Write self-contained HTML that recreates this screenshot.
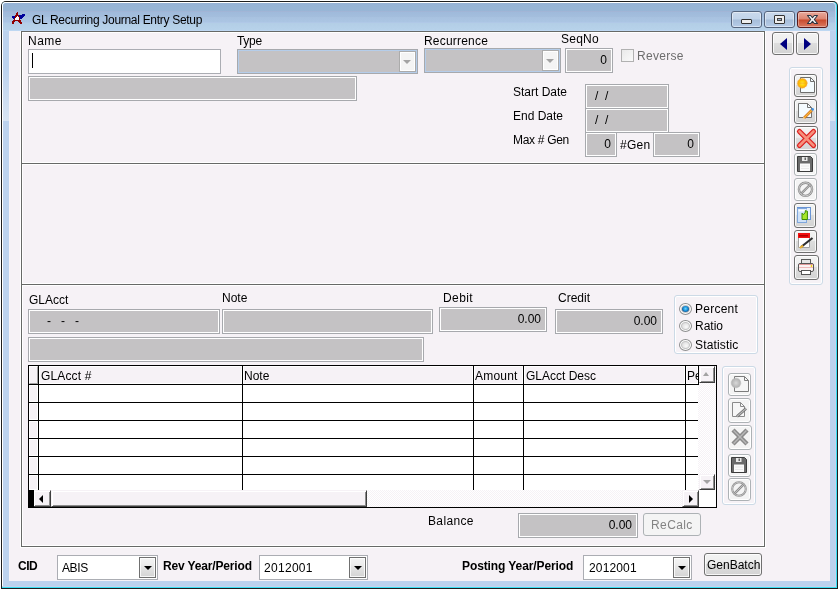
<!DOCTYPE html>
<html><head><meta charset="utf-8">
<style>
*{box-sizing:border-box}
html,body{margin:0;padding:0;width:839px;height:590px;overflow:hidden;background:#fff;-webkit-font-smoothing:antialiased;font-family:"Liberation Sans",sans-serif;font-size:12px;color:#000}
.a{position:absolute}
.t{position:absolute;white-space:nowrap;line-height:14px;font-size:12px}
.b{font-weight:bold}
/* gray readonly field: gray border, white inner ring, gray fill */
.fld{position:absolute;border:1px solid #A7A9AD;background:#C4C2C4;box-shadow:inset 0 0 0 1px #fff}
/* combo disabled with light blue inner ring */
.cmb{position:absolute;border:1px solid #A7A9AD;background:#C4C2C4;box-shadow:inset 0 0 0 1px #B5CDEA}
.dd{position:absolute;border:1px solid #ABABAB;background:#F4F4F4;box-shadow:inset 0 0 0 1px #fff}
.tri{position:absolute;width:0;height:0;border-left:4px solid transparent;border-right:4px solid transparent;border-top:4px solid #A3A3A3}
.hl{position:absolute;height:1px;background:#676967}
.vl{position:absolute;width:1px;background:#676967}
.wh{position:absolute;background:#fff}
.tb{position:absolute;border:1px solid #707070;border-radius:3px;background:linear-gradient(#F3F3F3 0%,#EDEDED 45%,#DDDDDD 50%,#D3D3D3 100%);box-shadow:inset 0 0 0 1px rgba(255,255,255,.8)}
.tbd{position:absolute;border:1px solid #ADB2B5;border-radius:3px;background:#F4F4F4;box-shadow:inset 0 0 0 1px #fff}
.grp{position:absolute;border:1px solid #CCDAE6;border-radius:3px;box-shadow:inset 0 0 0 1px #fff}
#root{position:absolute;left:0;top:0;width:839px;height:590px;will-change:transform}
</style></head><body><div id="root">
<!-- window frame -->
<div class="a" style="left:1px;top:1px;width:837px;height:588px;background:#1E1E1E;border-radius:5px 5px 0 0"></div>
<div class="a" style="left:2px;top:2px;width:835px;height:586px;background:#3AE0F4;border-radius:4px 4px 0 0"></div>
<div class="a" style="left:2px;top:2px;width:834px;height:585px;background:#C7D3EC;border-radius:4px 4px 0 0"></div>
<div class="a" style="left:2px;top:2px;width:833px;height:584px;background:#fff;border-radius:4px 4px 0 0"></div>
<div class="a" style="left:3px;top:3px;width:832px;height:583px;background:#BCD2EE;border-radius:3px 3px 0 0"></div>
<div class="a" style="left:3px;top:3px;width:832px;height:28px;border-radius:3px 3px 0 0;background:linear-gradient(#96B3D6 0px,#98B6D6 8px,#A2B5D6 8px,#A2B5D6 9px,#9FBADB 9px,#A4BEDD 14px,#A8C2E0 14px,#ABC5E3 19px,#B0C8E7 19px,#B0C8E7 20px,#B3CEE6 20px,#B7D2EA 27px,#BED7F2 27px)"></div>
<div class="a" style="left:3px;top:67px;width:6px;height:54px;background:linear-gradient(#BCD2EE,#D8E4F3)"></div>
<div class="a" style="left:830px;top:67px;width:5px;height:54px;background:linear-gradient(#BCD2EE,#D8E4F3)"></div>
<div class="a" style="left:9px;top:31px;width:821px;height:550px;background:#F6F2F6"></div>

<!-- title -->
<svg class="a" style="left:0;top:0" width="30" height="30" shape-rendering="crispEdges"><rect x="22" y="14" width="1" height="1" fill="#00009A"/><rect x="23" y="14" width="1" height="1" fill="#00009A"/><rect x="24" y="14" width="1" height="1" fill="#00009A"/><rect x="19" y="15" width="1" height="1" fill="#00009A"/><rect x="20" y="15" width="1" height="1" fill="#00009A"/><rect x="21" y="15" width="1" height="1" fill="#00009A"/><rect x="22" y="15" width="1" height="1" fill="#00009A"/><rect x="23" y="15" width="1" height="1" fill="#00009A"/><rect x="24" y="15" width="1" height="1" fill="#00009A"/><rect x="12" y="16" width="1" height="1" fill="#00009A"/><rect x="13" y="16" width="1" height="1" fill="#00009A"/><rect x="14" y="16" width="1" height="1" fill="#00009A"/><rect x="19" y="16" width="1" height="1" fill="#00009A"/><rect x="20" y="16" width="1" height="1" fill="#00009A"/><rect x="21" y="16" width="1" height="1" fill="#00009A"/><rect x="22" y="16" width="1" height="1" fill="#00009A"/><rect x="23" y="16" width="1" height="1" fill="#00009A"/><rect x="12" y="17" width="1" height="1" fill="#00009A"/><rect x="13" y="17" width="1" height="1" fill="#00009A"/><rect x="14" y="17" width="1" height="1" fill="#00009A"/><rect x="19" y="17" width="1" height="1" fill="#00009A"/><rect x="20" y="17" width="1" height="1" fill="#00009A"/><rect x="21" y="17" width="1" height="1" fill="#00009A"/><rect x="22" y="17" width="1" height="1" fill="#00009A"/><rect x="13" y="18" width="1" height="1" fill="#00009A"/><rect x="20" y="18" width="1" height="1" fill="#00009A"/><rect x="21" y="18" width="1" height="1" fill="#00009A"/><rect x="17" y="12" width="1" height="1" fill="#900000"/><rect x="16" y="13" width="1" height="1" fill="#900000"/><rect x="17" y="13" width="1" height="1" fill="#900000"/><rect x="16" y="14" width="1" height="1" fill="#900000"/><rect x="17" y="14" width="1" height="1" fill="#900000"/><rect x="15" y="15" width="1" height="1" fill="#900000"/><rect x="16" y="15" width="1" height="1" fill="#900000"/><rect x="17" y="15" width="1" height="1" fill="#900000"/><rect x="18" y="15" width="1" height="1" fill="#900000"/><rect x="15" y="16" width="1" height="1" fill="#900000"/><rect x="16" y="16" width="1" height="1" fill="#900000"/><rect x="18" y="16" width="1" height="1" fill="#900000"/><rect x="15" y="17" width="1" height="1" fill="#900000"/><rect x="19" y="17" width="1" height="1" fill="#900000"/><rect x="14" y="18" width="1" height="1" fill="#900000"/><rect x="19" y="18" width="1" height="1" fill="#900000"/><rect x="14" y="19" width="1" height="1" fill="#900000"/><rect x="19" y="19" width="1" height="1" fill="#900000"/><rect x="13" y="20" width="1" height="1" fill="#900000"/><rect x="14" y="20" width="1" height="1" fill="#900000"/><rect x="15" y="20" width="1" height="1" fill="#900000"/><rect x="16" y="20" width="1" height="1" fill="#900000"/><rect x="17" y="20" width="1" height="1" fill="#900000"/><rect x="18" y="20" width="1" height="1" fill="#900000"/><rect x="19" y="20" width="1" height="1" fill="#900000"/><rect x="20" y="20" width="1" height="1" fill="#900000"/><rect x="12" y="21" width="1" height="1" fill="#900000"/><rect x="13" y="21" width="1" height="1" fill="#900000"/><rect x="14" y="21" width="1" height="1" fill="#900000"/><rect x="18" y="21" width="1" height="1" fill="#900000"/><rect x="19" y="21" width="1" height="1" fill="#900000"/><rect x="20" y="21" width="1" height="1" fill="#900000"/><rect x="12" y="22" width="1" height="1" fill="#900000"/><rect x="13" y="22" width="1" height="1" fill="#900000"/><rect x="19" y="22" width="1" height="1" fill="#900000"/><rect x="20" y="22" width="1" height="1" fill="#900000"/><rect x="21" y="22" width="1" height="1" fill="#900000"/><rect x="12" y="23" width="1" height="1" fill="#900000"/><rect x="13" y="23" width="1" height="1" fill="#900000"/><rect x="20" y="23" width="1" height="1" fill="#900000"/><rect x="21" y="23" width="1" height="1" fill="#900000"/><rect x="17" y="16" width="1" height="1" fill="#FFFFFF"/><rect x="16" y="17" width="1" height="1" fill="#FFFFFF"/><rect x="17" y="17" width="1" height="1" fill="#FFFFFF"/><rect x="18" y="17" width="1" height="1" fill="#FFFFFF"/><rect x="15" y="18" width="1" height="1" fill="#FFFFFF"/><rect x="16" y="18" width="1" height="1" fill="#FFFFFF"/><rect x="17" y="18" width="1" height="1" fill="#FFFFFF"/><rect x="18" y="18" width="1" height="1" fill="#FFFFFF"/><rect x="15" y="19" width="1" height="1" fill="#FFFFFF"/><rect x="16" y="19" width="1" height="1" fill="#FFFFFF"/><rect x="17" y="19" width="1" height="1" fill="#FFFFFF"/><rect x="18" y="19" width="1" height="1" fill="#FFFFFF"/></svg>
<div class="t" style="left:32px;top:13px;font-size:12px;letter-spacing:-0.3px">GL Recurring Journal Entry Setup</div>

<!-- caption buttons -->
<div class="a" style="left:731px;top:11px;width:31px;height:17px;border:1px solid #55657E;border-radius:3px;background:linear-gradient(#CAD9EC 0%,#C1D4EA 48%,#A6BDD9 52%,#B6CCE8 100%);box-shadow:inset 0 0 0 1px rgba(255,255,255,.45)"></div>
<div class="a" style="left:741px;top:19px;width:11px;height:5px;border:1px solid #333;border-radius:1px;background:#EEE"></div>
<div class="a" style="left:764px;top:11px;width:31px;height:17px;border:1px solid #55657E;border-radius:3px;background:linear-gradient(#CAD9EC 0%,#C1D4EA 48%,#A6BDD9 52%,#B6CCE8 100%);box-shadow:inset 0 0 0 1px rgba(255,255,255,.45)"></div>
<div class="a" style="left:774px;top:15px;width:11px;height:9px;border:1px solid #333;border-radius:1px;background:#EEE"></div>
<div class="a" style="left:777px;top:18px;width:5px;height:3px;border:1px solid #444;background:#9FB4D0"></div>
<div class="a" style="left:797px;top:11px;width:31px;height:17px;border:1px solid #5A1A1A;border-radius:3px;background:linear-gradient(#E9A99C 0%,#DC8470 48%,#C84A2C 52%,#D97A62 100%);box-shadow:inset 0 0 0 1px rgba(255,255,255,.35)"></div>
<svg class="a" style="left:806px;top:14px" width="13" height="11"><polygon points="1.5,1.5 4.6,1.5 6.5,3.7 8.4,1.5 11.5,1.5 8.3,5.5 11.5,9.5 8.4,9.5 6.5,7.3 4.6,9.5 1.5,9.5 4.7,5.5" fill="#F4F4F4" stroke="#2E3642" stroke-width="1.1" stroke-linejoin="round"/></svg>

<!-- panel lines (groove) -->
<div class="wh" style="left:20px;top:31px;width:1px;height:517px"></div>
<div class="wh" style="left:765px;top:31px;width:1px;height:517px"></div>
<div class="wh" style="left:22px;top:32px;width:741px;height:1px"></div>
<div class="wh" style="left:22px;top:162px;width:741px;height:3px"></div>
<div class="wh" style="left:22px;top:283px;width:741px;height:3px"></div>
<div class="wh" style="left:22px;top:545px;width:741px;height:1px"></div>
<div class="wh" style="left:20px;top:547px;width:746px;height:1px"></div>
<div class="wh" style="left:22px;top:32px;width:1px;height:514px"></div>
<div class="wh" style="left:763px;top:32px;width:1px;height:514px"></div>
<div class="hl" style="left:21px;top:31px;width:744px"></div>
<div class="hl" style="left:21px;top:163px;width:744px"></div>
<div class="hl" style="left:21px;top:284px;width:744px"></div>
<div class="hl" style="left:21px;top:546px;width:744px"></div>
<div class="vl" style="left:21px;top:31px;height:516px"></div>
<div class="vl" style="left:764px;top:31px;height:516px"></div>

<!-- top section -->
<div class="t" style="left:28px;top:34px;letter-spacing:0.5px">Name</div>
<div class="t" style="left:237px;top:34px;letter-spacing:-0.3px">Type</div>
<div class="t" style="left:424px;top:34px;letter-spacing:0.2px">Recurrence</div>
<div class="t" style="left:561px;top:32px;letter-spacing:0.25px">SeqNo</div>

<div class="a" style="left:28px;top:49px;width:193px;height:25px;border:1px solid #ABADB3;background:#fff"></div>
<div class="a" style="left:32px;top:53px;width:1px;height:15px;background:#000"></div>

<div class="cmb" style="left:237px;top:49px;width:181px;height:25px"></div>
<div class="dd" style="left:399px;top:51px;width:17px;height:21px"></div>
<div class="tri" style="left:403px;top:60px;border-left-width:4px;border-right-width:4px"></div>

<div class="cmb" style="left:424px;top:48px;width:137px;height:25px"></div>
<div class="dd" style="left:542px;top:50px;width:17px;height:21px"></div>
<div class="tri" style="left:546px;top:59px"></div>

<div class="fld" style="left:565px;top:48px;width:48px;height:25px"></div>
<div class="t" style="left:565px;top:53px;width:42px;text-align:right">0</div>

<div class="a" style="left:621px;top:49px;width:13px;height:13px;border:1px solid #B1B1B1;background:linear-gradient(135deg,#E9E9E9,#FAFAFA)"></div>
<div class="t" style="left:637px;top:49px;color:#6D6D6D;letter-spacing:0.3px">Reverse</div>

<div class="fld" style="left:28px;top:76px;width:329px;height:25px"></div>

<div class="t" style="left:513px;top:85px">Start Date</div>
<div class="t" style="left:513px;top:109px">End Date</div>
<div class="t" style="left:513px;top:133px;letter-spacing:-0.3px">Max # Gen</div>
<div class="fld" style="left:585px;top:84px;width:84px;height:25px"></div>
<div class="fld" style="left:585px;top:108px;width:84px;height:25px"></div>
<div class="t" style="left:595px;top:89px">/&nbsp;&nbsp;/</div>
<div class="t" style="left:595px;top:113px">/&nbsp;&nbsp;/</div>
<div class="fld" style="left:585px;top:132px;width:32px;height:25px"></div>
<div class="t" style="left:585px;top:137px;width:26px;text-align:right">0</div>
<div class="t" style="left:620px;top:138px;letter-spacing:0.3px">#Gen</div>
<div class="fld" style="left:653px;top:132px;width:47px;height:25px"></div>
<div class="t" style="left:653px;top:137px;width:41px;text-align:right">0</div>

<!-- detail section -->
<div class="t" style="left:29px;top:293px">GLAcct</div>
<div class="t" style="left:222px;top:291px">Note</div>
<div class="t" style="left:443px;top:291px;letter-spacing:0.4px">Debit</div>
<div class="t" style="left:558px;top:291px">Credit</div>

<div class="fld" style="left:28px;top:309px;width:192px;height:25px"></div>
<div class="t" style="left:47px;top:314px">-&nbsp;&nbsp;&nbsp;-&nbsp;&nbsp;&nbsp;-</div>
<div class="fld" style="left:222px;top:309px;width:211px;height:25px"></div>
<div class="fld" style="left:439px;top:307px;width:108px;height:25px"></div>
<div class="t" style="left:439px;top:312px;width:102px;text-align:right">0.00</div>
<div class="fld" style="left:555px;top:309px;width:108px;height:25px"></div>
<div class="t" style="left:555px;top:314px;width:102px;text-align:right">0.00</div>
<div class="fld" style="left:28px;top:337px;width:396px;height:25px"></div>

<div class="grp" style="left:674px;top:295px;width:84px;height:59px"></div>
<div class="a" style="left:679px;top:303px;width:13px;height:12px;border-radius:50%;border:1px solid #8E8F8F;background:#FDFDFD"></div>
<div class="a" style="left:681px;top:305px;width:9px;height:8px;border-radius:50%;border:1px solid #C8C8C8;background:#E6E6E6"></div>
<div class="a" style="left:682px;top:306px;width:7px;height:6px;border-radius:50%;background:radial-gradient(circle at 50% 45%,#6FD6FF 0,#1A90D8 45%,#0A3468 85%,#1C2C40 100%)"></div>
<div class="a" style="left:679px;top:320px;width:13px;height:12px;border-radius:50%;border:1px solid #8E8F8F;background:#FDFDFD"></div>
<div class="a" style="left:681px;top:322px;width:9px;height:8px;border-radius:50%;border:1px solid #C2C2C2;background:radial-gradient(circle at 60% 65%,#FAFAFA 0,#E4E4E4 60%,#D0D0D0 100%)"></div>
<div class="a" style="left:679px;top:339px;width:13px;height:12px;border-radius:50%;border:1px solid #8E8F8F;background:#FDFDFD"></div>
<div class="a" style="left:681px;top:341px;width:9px;height:8px;border-radius:50%;border:1px solid #C2C2C2;background:radial-gradient(circle at 60% 65%,#FAFAFA 0,#E4E4E4 60%,#D0D0D0 100%)"></div>
<div class="t" style="left:695px;top:302px;letter-spacing:0.25px">Percent</div>
<div class="t" style="left:695px;top:319px">Ratio</div>
<div class="t" style="left:695px;top:338px;letter-spacing:0.15px">Statistic</div>

<!-- grid -->
<div class="a" style="left:28px;top:365px;width:689px;height:143px;background:#000"></div>
<div class="a" style="left:29px;top:366px;width:670px;height:124px;background:#fff"></div>
<div class="a" style="left:39px;top:366px;width:203px;height:18px;background:#F6F2F6;border:1px solid #fff"></div>
<div class="a" style="left:243px;top:366px;width:230px;height:18px;background:#F6F2F6;border:1px solid #fff"></div>
<div class="a" style="left:474px;top:366px;width:49px;height:18px;background:#F6F2F6;border:1px solid #fff"></div>
<div class="a" style="left:524px;top:366px;width:161px;height:18px;background:#F6F2F6;border:1px solid #fff"></div>
<div class="a" style="left:686px;top:366px;width:12px;height:18px;background:#F6F2F6;border:1px solid #fff"></div>

<div class="hl" style="left:29px;top:384px;width:670px;background:#000"></div>
<div class="hl" style="left:29px;top:402px;width:669px;background:#000"></div>
<div class="hl" style="left:29px;top:420px;width:669px;background:#000"></div>
<div class="hl" style="left:29px;top:438px;width:669px;background:#000"></div>
<div class="hl" style="left:29px;top:456px;width:669px;background:#000"></div>
<div class="hl" style="left:29px;top:474px;width:669px;background:#000"></div>
<div class="vl" style="left:38px;top:366px;height:124px;background:#000"></div>
<div class="vl" style="left:242px;top:366px;height:124px;background:#000"></div>
<div class="vl" style="left:473px;top:366px;height:124px;background:#000"></div>
<div class="vl" style="left:523px;top:366px;height:124px;background:#000"></div>
<div class="vl" style="left:685px;top:366px;height:124px;background:#000"></div>
<div class="a" style="left:29px;top:366px;width:9px;height:18px;background:#F6F2F6;border-style:solid;border-width:1px;border-color:#fff #A0A0A0 #A0A0A0 #fff"></div>
<div class="a" style="left:29px;top:385px;width:9px;height:17px;background:#F6F2F6;border:1px solid #fff"></div>
<div class="a" style="left:29px;top:403px;width:9px;height:17px;background:#F6F2F6;border:1px solid #fff"></div>
<div class="a" style="left:29px;top:421px;width:9px;height:17px;background:#F6F2F6;border:1px solid #fff"></div>
<div class="a" style="left:29px;top:439px;width:9px;height:17px;background:#F6F2F6;border:1px solid #fff"></div>
<div class="a" style="left:29px;top:457px;width:9px;height:17px;background:#F6F2F6;border:1px solid #fff"></div>
<div class="a" style="left:29px;top:475px;width:9px;height:15px;background:#F6F2F6;border:1px solid #fff"></div>
<div class="t" style="left:41px;top:369px;letter-spacing:0.15px">GLAcct #</div>
<div class="t" style="left:244px;top:369px">Note</div>
<div class="t" style="left:475px;top:369px;letter-spacing:0.2px">Amount</div>
<div class="t" style="left:526px;top:369px">GLAcct Desc</div>
<div class="t" style="left:687px;top:369px;width:11px;overflow:hidden">Pe</div>

<!-- vscroll -->
<div class="a" style="left:698px;top:366px;width:18px;height:124px;background:repeating-conic-gradient(#F6F2F6 0 25%,#FFFFFF 0 50%) 0 0/2px 2px"></div>
<div class="a" style="left:699px;top:366px;width:16px;height:17px;background:#F6F2F6;border-style:solid;border-width:1px;border-color:#F6F2F6 #3E3E3E #3E3E3E #F6F2F6;box-shadow:inset 1px 1px 0 #fff,inset -1px -1px 0 #8C8C8C"></div>
<div class="tri" style="left:703px;top:372px;border-top:0;border-bottom:4px solid #A3A3A3;border-left-width:3.5px;border-right-width:3.5px"></div>
<div class="a" style="left:699px;top:474px;width:16px;height:16px;background:#F6F2F6;border-style:solid;border-width:1px;border-color:#F6F2F6 #3E3E3E #3E3E3E #F6F2F6;box-shadow:inset 1px 1px 0 #fff,inset -1px -1px 0 #8C8C8C"></div>
<div class="tri" style="left:703px;top:480px"></div>
<div class="vl" style="left:698px;top:366px;height:19px;background:#000"></div>
<!-- hscroll -->
<div class="a" style="left:29px;top:490px;width:670px;height:17px;background:repeating-conic-gradient(#F6F2F6 0 25%,#FFFFFF 0 50%) 0 0/2px 2px"></div>
<div class="a" style="left:699px;top:490px;width:17px;height:17px;background:#FFFFFF"></div>
<div class="a" style="left:33px;top:490px;width:18px;height:17px;background:#F6F2F6;border-style:solid;border-width:1px;border-color:#F6F2F6 #3E3E3E #3E3E3E #F6F2F6;box-shadow:inset 1px 1px 0 #fff,inset -1px -1px 0 #8C8C8C"></div>
<div class="a" style="left:39px;top:495px;width:0;height:0;border-top:4px solid transparent;border-bottom:4px solid transparent;border-right:4px solid #000"></div>
<div class="a" style="left:28px;top:490px;width:6px;height:18px;background:#000"></div>

<div class="a" style="left:51px;top:490px;width:316px;height:17px;background:#F6F2F6;border-style:solid;border-width:1px;border-color:#F6F2F6 #3E3E3E #3E3E3E #F6F2F6;box-shadow:inset 1px 1px 0 #fff,inset -1px -1px 0 #8C8C8C"></div>
<div class="a" style="left:682px;top:490px;width:17px;height:17px;background:#F6F2F6;border-style:solid;border-width:1px;border-color:#F6F2F6 #3E3E3E #3E3E3E #F6F2F6;box-shadow:inset 1px 1px 0 #fff,inset -1px -1px 0 #8C8C8C"></div>
<div class="a" style="left:689px;top:495px;width:0;height:0;border-top:4px solid transparent;border-bottom:4px solid transparent;border-left:4px solid #000"></div>

<!-- balance row -->
<div class="t" style="left:428px;top:514px;letter-spacing:0.35px">Balance</div>
<div class="fld" style="left:518px;top:513px;width:120px;height:25px"></div>
<div class="t" style="left:518px;top:518px;width:114px;text-align:right">0.00</div>
<div class="a" style="left:643px;top:513px;width:58px;height:23px;border:1px solid #ADB2B5;border-radius:3px;background:#F4F4F4"></div>
<div class="t" style="left:651px;top:518px;color:#838383;letter-spacing:0.4px">ReCalc</div>

<!-- bottom bar -->
<div class="t b" style="left:18px;top:559px;letter-spacing:-0.5px">CID</div>
<div class="a" style="left:57px;top:555px;width:101px;height:25px;border:1px solid #ABADB3;background:#fff"></div>
<div class="t" style="left:62px;top:561px;letter-spacing:-0.4px">ABIS</div>
<div class="tb" style="left:139px;top:557px;width:17px;height:21px;border-radius:0;background:linear-gradient(#F3F3F3 0%,#EEEEEE 30%,#E2E2E2 55%,#D4D4D4 100%)"></div>
<div class="a" style="left:144px;top:566px;width:0;height:0;border-left:4px solid transparent;border-right:4px solid transparent;border-top:4px solid #000"></div>

<div class="t b" style="left:163px;top:559px;letter-spacing:-0.15px">Rev Year/Period</div>
<div class="a" style="left:259px;top:555px;width:109px;height:25px;border:1px solid #ABADB3;background:#fff"></div>
<div class="t" style="left:264px;top:561px;letter-spacing:0.3px">2012001</div>
<div class="tb" style="left:349px;top:557px;width:17px;height:21px;border-radius:0;background:linear-gradient(#F3F3F3 0%,#EEEEEE 30%,#E2E2E2 55%,#D4D4D4 100%)"></div>
<div class="a" style="left:354px;top:566px;width:0;height:0;border-left:4px solid transparent;border-right:4px solid transparent;border-top:4px solid #000"></div>

<div class="t b" style="left:462px;top:559px;letter-spacing:-0.1px">Posting Year/Period</div>
<div class="a" style="left:583px;top:555px;width:109px;height:25px;border:1px solid #ABADB3;background:#fff"></div>
<div class="t" style="left:589px;top:561px;letter-spacing:0.15px">2012001</div>
<div class="tb" style="left:673px;top:557px;width:17px;height:21px;border-radius:0;background:linear-gradient(#F3F3F3 0%,#EEEEEE 30%,#E2E2E2 55%,#D4D4D4 100%)"></div>
<div class="a" style="left:678px;top:566px;width:0;height:0;border-left:4px solid transparent;border-right:4px solid transparent;border-top:4px solid #000"></div>

<div class="tb" style="left:704px;top:553px;width:58px;height:23px"></div>
<div class="t" style="left:707px;top:558px">GenBatch</div>

<!-- right toolbar -->
<div class="tb" style="left:772px;top:32px;width:22px;height:23px"></div>
<div class="a" style="left:780px;top:38px;width:0;height:0;border-top:6.5px solid transparent;border-bottom:6.5px solid transparent;border-right:7.5px solid #000080"></div>
<div class="tb" style="left:796px;top:32px;width:23px;height:23px"></div>
<div class="a" style="left:804px;top:38px;width:0;height:0;border-top:6.5px solid transparent;border-bottom:6.5px solid transparent;border-left:7.5px solid #000080"></div>

<div class="grp" style="left:789px;top:67px;width:34px;height:218px"></div>
<div class="tb" style="left:794px;top:74px;width:23px;height:23px"></div>
<div class="tb" style="left:794px;top:99px;width:23px;height:25px"></div>
<div class="tb" style="left:794px;top:126px;width:24px;height:25px"></div>
<div class="tbd" style="left:794px;top:153px;width:23px;height:23px"></div>
<div class="tbd" style="left:794px;top:178px;width:23px;height:23px"></div>
<div class="tb" style="left:794px;top:203px;width:22px;height:25px"></div>
<div class="tb" style="left:794px;top:230px;width:23px;height:23px"></div>
<div class="tb" style="left:794px;top:255px;width:25px;height:25px"></div>

<div class="grp" style="left:722px;top:366px;width:34px;height:139px"></div>
<div class="tbd" style="left:728px;top:373px;width:23px;height:23px"></div>
<div class="tbd" style="left:728px;top:398px;width:23px;height:25px"></div>
<div class="tbd" style="left:728px;top:425px;width:24px;height:25px"></div>
<div class="tbd" style="left:728px;top:454px;width:23px;height:23px"></div>
<div class="tbd" style="left:728px;top:478px;width:23px;height:23px"></div>

<svg class="a" style="left:0;top:0" width="839" height="590">
<defs>
<radialGradient id="sun" cx="50%" cy="50%" r="50%"><stop offset="0" stop-color="#FFE840"/><stop offset="0.6" stop-color="#FFC800"/><stop offset="1" stop-color="#F39A1E"/></radialGradient>
<radialGradient id="sung" cx="50%" cy="50%" r="50%"><stop offset="0" stop-color="#D8D8D8"/><stop offset="1" stop-color="#B0B0B0"/></radialGradient>
</defs>
<!-- 1 new -->
<path d="M800.5 77.5 H810.5 L814.5 81.5 V92.5 H800.5 Z" fill="#F4FBFF" stroke="#6E6E6E"/>
<path d="M810.5 77.5 V81.5 H814.5" fill="none" stroke="#6E6E6E"/>
<circle cx="802.3" cy="83.3" r="4.9" fill="url(#sun)" stroke="#F7B84A" stroke-width="1" stroke-dasharray="0.9 0.7"/><rect x="798.5" y="82.6" width="7.6" height="1.3" fill="#F2A020" opacity="0.45"/>
<!-- 2 edit -->
<path d="M798.5 103.5 H807.5 L811.5 107.5 V117.5 H798.5 Z" fill="#F4FBFF" stroke="#737373"/>
<path d="M807.5 103.5 V107.5 H811.5" fill="none" stroke="#737373"/>
<line x1="804" y1="118" x2="812" y2="110" stroke="#D06A1A" stroke-width="2.6"/>
<line x1="804" y1="118" x2="812" y2="110" stroke="#F8B838" stroke-width="1.2"/>
<circle cx="812.6" cy="109.4" r="1.3" fill="#3C8EE0"/>
<path d="M802.6 119.6 L803.2 117 L805 118.8 Z" fill="#F2D8A8"/>
<!-- 3 delete -->
<path d="M799.5 131.5 L813.5 145.5 M813.5 131.5 L799.5 145.5" stroke="#DC2020" stroke-width="5.2" stroke-linecap="round"/>
<path d="M799.5 131.5 L813.5 145.5 M813.5 131.5 L799.5 145.5" stroke="#F7907C" stroke-width="2.6" stroke-linecap="round"/>
<!-- 4 save -->
<path d="M797.5 156.5 H810.5 L812.5 158.5 V171.5 H797.5 Z" fill="#6A6A6A" stroke="#3C3C3C"/>
<rect x="802" y="157" width="5.5" height="4" fill="#E8E8E8"/>
<rect x="804.5" y="157.5" width="1.5" height="2.5" fill="#666"/>
<rect x="800" y="163.5" width="10" height="7.5" fill="#FAFAFA"/><line x1="801" y1="166" x2="809" y2="166" stroke="#DDD" stroke-width="0.6"/><line x1="801" y1="168.5" x2="809" y2="168.5" stroke="#DDD" stroke-width="0.6"/>
<!-- 5 cancel -->
<circle cx="805.5" cy="189.3" r="6.6" fill="#F4F4F4" stroke="#8C8C8C" stroke-width="2.4"/>
<circle cx="805.5" cy="189.3" r="6.6" fill="none" stroke="#D4D4D4" stroke-width="0.9"/>
<line x1="809.8" y1="185" x2="801.2" y2="193.6" stroke="#8C8C8C" stroke-width="2.4"/>
<line x1="809.8" y1="185" x2="801.2" y2="193.6" stroke="#D8D8D8" stroke-width="0.7"/>
<!-- 6 copy -->
<rect x="797.5" y="207.5" width="13" height="12" fill="#E6F0FB" stroke="#6A94D4"/>
<rect x="797.5" y="208.5" width="9" height="14" fill="#CFE1F7" stroke="#7FA6DC"/>
<rect x="798.5" y="209.5" width="9" height="2" fill="#F8FBFF"/>
<path d="M802 219.5 V213.2 L803.4 214.6 L805.3 212.3 V210.6 L807.4 211.2 V219.5 Z" fill="#A6E62A" stroke="#3C8C00" stroke-width="1"/>
<!-- 7 notes -->
<rect x="798" y="233" width="12" height="5" fill="#F01010"/>
<rect x="799" y="235" width="9" height="1.5" fill="#B00000"/>
<path d="M798.5 238 V247.5 H809.5 V238" fill="#FFFFFF" stroke="#A0A0A0"/>
<line x1="801" y1="247" x2="812.5" y2="238" stroke="#2E2E2E" stroke-width="2.2"/>
<line x1="800" y1="248" x2="803" y2="245.6" stroke="#E8B030" stroke-width="2.2"/>
<!-- 8 print -->
<rect x="801.5" y="259.5" width="9" height="4.5" fill="#E6E6E6" stroke="#5A5A5A"/>
<rect x="798.5" y="263.5" width="15" height="8" rx="1.5" fill="#FAF2F2" stroke="#555"/>
<line x1="799" y1="267.5" x2="813" y2="267.5" stroke="#F0B8B8"/>
<line x1="799" y1="264.5" x2="813" y2="264.5" stroke="#E09A9A"/>
<rect x="801.5" y="270.5" width="9" height="4" fill="#FFFFFF" stroke="#555"/>
<circle cx="811.5" cy="266" r="0.9" fill="#F0D000"/>

<!-- second toolbar (disabled) -->
<path d="M734.5 376.5 H744.5 L748.5 380.5 V391.5 H734.5 Z" fill="#F6F6F6" stroke="#7C7C7C"/>
<path d="M744.5 376.5 V380.5 H748.5" fill="none" stroke="#7C7C7C"/>
<circle cx="736" cy="383" r="4.8" fill="url(#sung)" stroke="#BEBEBE" stroke-width="0.8" stroke-dasharray="1 0.6"/>

<path d="M732.5 402.5 H740.5 L744.5 406.5 V416.5 H732.5 Z" fill="#F6F6F6" stroke="#8A8A8A"/>
<path d="M740.5 402.5 V406.5 H744.5" fill="none" stroke="#8A8A8A"/>
<line x1="737" y1="416.5" x2="746" y2="408.5" stroke="#6A6A6A" stroke-width="2.8"/>
<line x1="737" y1="416.5" x2="746" y2="408.5" stroke="#B8B8B8" stroke-width="1.2"/>

<path d="M733 430 L747 444 M747 430 L733 444" stroke="#8A8A8A" stroke-width="4.4"/>
<path d="M733.6 430.6 L746.4 443.4 M746.4 430.6 L733.6 443.4" stroke="#B8B8B8" stroke-width="1.4"/>

<path d="M731.5 457.5 H744.5 L746.5 459.5 V472.5 H731.5 Z" fill="#6A6A6A" stroke="#3C3C3C"/>
<rect x="736" y="458" width="5.5" height="4" fill="#E8E8E8"/>
<rect x="738.5" y="458.5" width="1.5" height="2.5" fill="#666"/>
<rect x="734" y="464.5" width="10" height="7.5" fill="#FAFAFA"/><line x1="735" y1="467" x2="743" y2="467" stroke="#DDD" stroke-width="0.6"/><line x1="735" y1="469.5" x2="743" y2="469.5" stroke="#DDD" stroke-width="0.6"/>

<circle cx="739" cy="489" r="6.8" fill="#F4F4F4" stroke="#8C8C8C" stroke-width="2"/>
<circle cx="739" cy="489" r="6.8" fill="none" stroke="#D8D8D8" stroke-width="0.7"/>
<line x1="743.3" y1="484.7" x2="734.7" y2="493.3" stroke="#8C8C8C" stroke-width="2.4"/>
<line x1="743.3" y1="484.7" x2="734.7" y2="493.3" stroke="#D8D8D8" stroke-width="0.7"/>
</svg>
</div></body></html>
